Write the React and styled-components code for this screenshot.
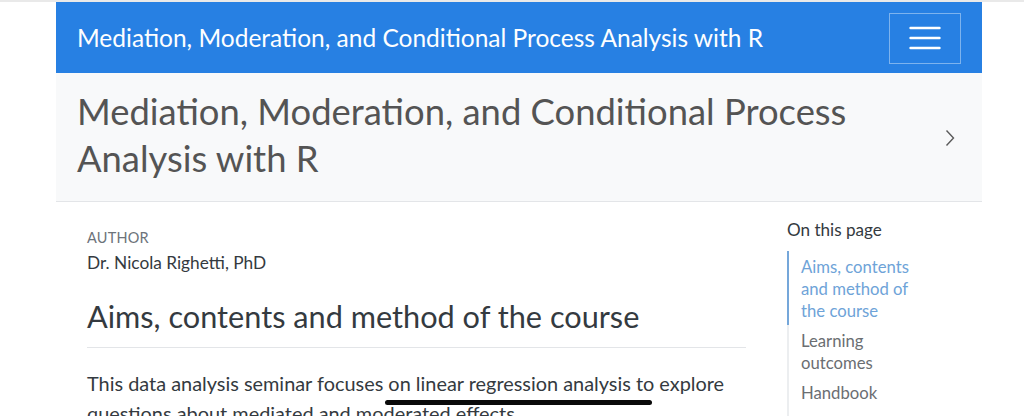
import React from 'react';
import styled, { createGlobalStyle } from 'styled-components';

const GlobalStyle = createGlobalStyle`
  html, body {
    margin: 0;
    padding: 0;
    background: #ffffff;
  }
  body {
    font-family: "Lato", "Noto Sans", sans-serif;
    color: #343a40;
    overflow: hidden;
  }
`;

const Page = styled.div`
  border-top: 2px solid #e9e9e9;
  height: 414px;
  overflow: hidden;
`;

const Container = styled.div`
  width: 926px;
  margin-left: 56px;
`;

const Navbar = styled.nav`
  height: 71px;
  background: #2780e3;
  display: flex;
  align-items: center;
  justify-content: space-between;
  padding: 0 21px 0 21px;
  box-sizing: border-box;
`;

const Brand = styled.a`
  color: #fdfeff;
  font-size: 24.5px;
  line-height: 30px;
  text-decoration: none;
  margin-top: 1px;
`;

const Toggler = styled.button`
  width: 72px;
  height: 51px;
  margin-top: 1px;
  background: transparent;
  border: 1px solid rgba(255, 255, 255, 0.4);
  display: flex;
  align-items: center;
  justify-content: center;
  padding: 0;
`;

const TitleBand = styled.header`
  background: #f8f9fa;
  border-bottom: 1px solid #e3e5e8;
  display: flex;
  align-items: center;
  justify-content: space-between;
  padding: 15px 27px 19px 21px;
`;

const Title = styled.h1`
  margin: 0;
  font-weight: 400;
  font-size: 36.4px;
  line-height: 47px;
  color: #545454;
`;

const ChevronWrap = styled.span`
  display: flex;
  margin-top: 5px;
`;

const Body = styled.div`
  display: flex;
  gap: 41px;
  padding-left: 31px;
`;

const Main = styled.main`
  width: 659px;
  padding-top: 26px;
`;

const Label = styled.div`
  font-size: 14.5px;
  line-height: 20px;
  color: #6d737a;
  letter-spacing: 0.2px;
`;

const Author = styled.div`
  margin-top: 3px;
  font-size: 17.3px;
  line-height: 24px;
  color: #343a40;
`;

const Heading = styled.h2`
  margin: 23px 0 0;
  padding-bottom: 12px;
  border-bottom: 1px solid #e3e5e8;
  font-weight: 400;
  font-size: 30.7px;
  line-height: 37px;
  color: #343a40;
`;

const Paragraph = styled.p`
  position: relative;
  margin: 20px 0 0;
  font-size: 19.9px;
  line-height: 30px;
  color: #343a40;
`;

const Scribble = styled.span`
  position: absolute;
  left: 298px;
  top: 32px;
  width: 267px;
  height: 5px;
  border-radius: 3px;
  background: #0a0a0a;
`;

const Sidebar = styled.aside`
  width: 195px;
  padding-top: 16px;
`;

const TocTitle = styled.div`
  font-size: 17.1px;
  line-height: 24px;
  color: #343a40;
  margin-bottom: 9px;
`;

const TocList = styled.ul`
  list-style: none;
  margin: 0;
  padding: 0;
  border-left: 2px solid #eceef0;
  height: 200px;
`;

const TocItem = styled.li`
  margin-left: -2px;
  padding: 5px 0 3px 12px;
  border-left: 2px solid ${(p) => (p.$active ? '#75a7da' : 'transparent')};
  font-size: 16.7px;
  line-height: 22px;
  color: ${(p) => (p.$active ? '#6ea3d8' : '#6b6e72')};
  width: 110px;
`;

const HamburgerIcon = () => (
  <svg width="32" height="24" viewBox="0 0 32 24">
    <g stroke="#ffffff" strokeWidth="2.4" strokeLinecap="round">
      <line x1="1.5" y1="2" x2="30.5" y2="2" />
      <line x1="1.5" y1="12" x2="30.5" y2="12" />
      <line x1="1.5" y1="22" x2="30.5" y2="22" />
    </g>
  </svg>
);

const Chevron = () => (
  <svg width="10" height="18" viewBox="0 0 10 18">
    <polyline points="1.5,1.5 8.5,9 1.5,16.5" fill="none" stroke="#5a5a5a" strokeWidth="1.4" />
  </svg>
);

const tocItems = [
  { label: 'Aims, contents and method of the course', active: true },
  { label: 'Learning outcomes' },
  { label: 'Handbook' },
];

export default function App() {
  return (
    <>
      <GlobalStyle />
      <Page>
        <Container>
          <Navbar>
            <Brand href="#">Mediation, Moderation, and Conditional Process Analysis with R</Brand>
            <Toggler aria-label="Toggle navigation">
              <HamburgerIcon />
            </Toggler>
          </Navbar>
          <TitleBand>
            <Title>
              Mediation, Moderation, and Conditional Process
              <br />
              Analysis with R
            </Title>
            <ChevronWrap>
              <Chevron />
            </ChevronWrap>
          </TitleBand>
          <Body>
            <Main>
              <Label>AUTHOR</Label>
              <Author>Dr. Nicola Righetti, PhD</Author>
              <Heading>Aims, contents and method of the course</Heading>
              <Paragraph>
                This data analysis seminar focuses on linear regression analysis to explore
                questions about mediated and moderated effects.
                <Scribble />
              </Paragraph>
            </Main>
            <Sidebar>
              <TocTitle>On this page</TocTitle>
              <TocList>
                {tocItems.map((item) => (
                  <TocItem key={item.label} $active={item.active}>
                    {item.label}
                  </TocItem>
                ))}
              </TocList>
            </Sidebar>
          </Body>
        </Container>
      </Page>
    </>
  );
}
